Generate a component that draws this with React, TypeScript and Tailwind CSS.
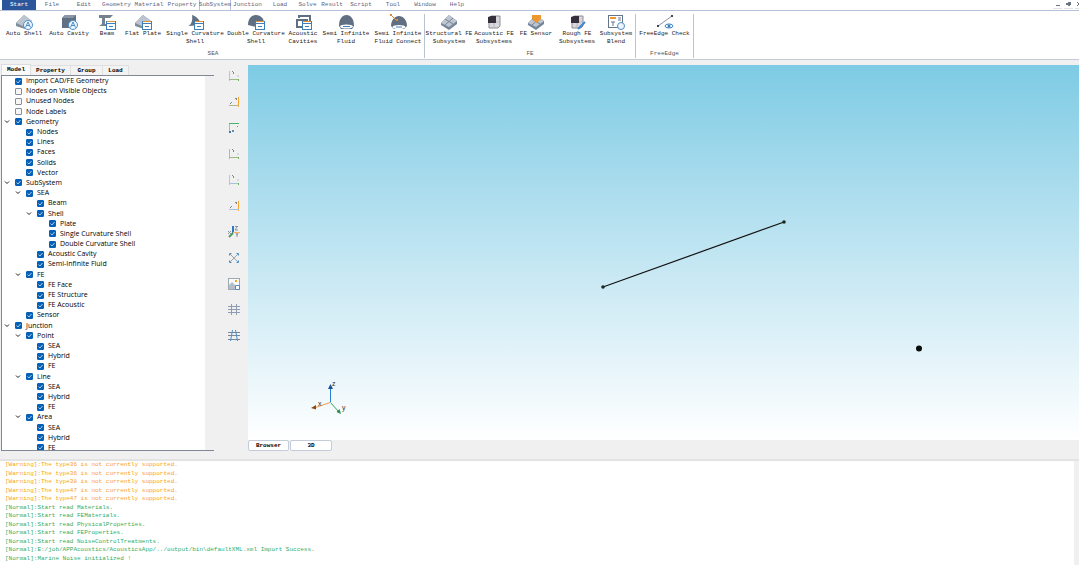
import React from 'react';

interface RibbonItem {
  label: string;
  width: string;
  icon: React.ReactNode;
}

interface TreeItem {
  label: string;
  level: number;
  open?: boolean;
  unchecked?: boolean;
}

const MENU = [
  { label: 'File', width: 'w-8' },
  { label: 'Edit', width: 'w-8' },
  { label: 'Geometry', width: 'w-[33px]' },
  { label: 'Material', width: 'w-8' },
  { label: 'Property', width: 'w-[34px]' },
  { label: 'SubSystem', width: 'w-8', active: true },
  { label: 'Junction', width: 'w-[33px]' },
  { label: 'Load', width: 'w-8' },
  { label: 'Solve', width: 'w-[23px]' },
  { label: 'Result', width: 'w-[26px]' },
  { label: 'Script', width: 'w-8' },
  { label: 'Tool', width: 'w-8' },
  { label: 'Window', width: 'w-8' },
  { label: 'Help', width: 'w-8' },
];

// ribbon icons share one 20x16 grid
function Glyph({ children }: { children: React.ReactNode }) {
  return (
    <svg viewBox="0 0 20 16" className="h-4 w-5" fill="none" aria-hidden="true">
      {children}
    </svg>
  );
}

const AutoBadge = () => (
  <g>
    <circle cx="14" cy="11" r="4.5" fill="#eef5fb" stroke="#4b8ec8" />
    <path d="M11.5 13.5l2.500-5.500 2.500 5.500M12.500 11.500h3" stroke="#4b8ec8" />
  </g>
);

const FormBadge = () => (
  <g>
    <rect x="9.5" y="7.5" width="9" height="8" fill="#fff" stroke="#3c7fbd" />
    <path d="M10 7.5h8" stroke="#e0923c" />
    <path d="M9 9.5h10M12 12.5h4" stroke="#3c7fbd" />
  </g>
);

const Slab = () => (
  <g>
    <path d="M2 9l8-8 8 6-7 8-9-3z" fill="#7d8b9b" />
    <path d="M2 9l8-8 8 6-7 6z" fill="#bcc5cf" />
  </g>
);

const Block = () => (
  <g>
    <path d="M2 9l8-8 8 6v3l-8 6-8-5z" fill="#76869a" />
    <path d="M2 9l8-8 8 6-8 6z" fill="#bcc5d0" />
    <path d="M6 5l8 5M6 11l8-7" stroke="#78879a" />
  </g>
);

const Cube = () => (
  <g>
    <path d="M5 4l2-2h9v10l-2 2H5z" fill="#d8d8dc" stroke="#8d8d94" />
    <path d="M9 8h7M10 8v6" stroke="#b6b6bb" />
    <path d="M4 3l3-1h5v7H4z" fill="#35303c" />
  </g>
);

const SEA_ITEMS: RibbonItem[] = [
  { label: 'Auto Shell', width: 'w-11', icon: <Glyph><Slab /><AutoBadge /></Glyph> },
  { label: 'Auto Cavity', width: 'w-[46px]', icon: <Glyph><path d="M3 4l3-3h11v9l-3 4H3z" fill="#607082" /><path d="M3 4l3-3h11l-3 3z" fill="#8896a6" /><AutoBadge /></Glyph> },
  { label: 'Beam', width: 'w-[30px]', icon: <Glyph><path d="M2 1h14l-3 3H8v6h3v2H2l3-2V4H2z" fill="#75818f" /><FormBadge /></Glyph> },
  { label: 'Flat Plate', width: 'w-[42px]', icon: <Glyph><Slab /><FormBadge /></Glyph> },
  { label: 'Single Curvature\nShell', width: 'w-[62px]', icon: <Glyph><path d="M7 1c4 1 8 5 10 10l-14 1c3-1 5-5 4-11z" fill="#607082" /><FormBadge /></Glyph> },
  { label: 'Double Curvature\nShell', width: 'w-[60px]', icon: <Glyph><path d="M2 11C2 4 6 1 10 1s8 3 8 8l-8 4z" fill="#607082" /><FormBadge /></Glyph> },
  { label: 'Acoustic\nCavities', width: 'w-[34px]', icon: <Glyph><path d="M6 4V2h11v6M4 14V6h10v3M3 13h6" stroke="#607082" strokeWidth="2" /><FormBadge /></Glyph> },
  { label: 'Semi Infinite\nFluid', width: 'w-[52px]', icon: <Glyph><path d="M3 12c0-7 3-11 7.500-11S18 5 18 12l-2 3H5z" fill="#607082" /><ellipse cx="10.500" cy="12.500" rx="6.500" ry="2" fill="#fff" /><path d="M7 12.500h7" stroke="#3c7fbd" /></Glyph> },
  { label: 'Semi Infinite\nFluid Connect', width: 'w-[52px]', icon: <Glyph><path d="M3 12c0-6 4-10 8-10s8 4 8 10l-3 3H6z" fill="#607082" /><ellipse cx="11" cy="13" rx="6.500" ry="2" fill="#fff" /><path d="M8 13h6" stroke="#3c7fbd" /><path d="M3 1l6 6" stroke="#d98a3a" /><path d="M2 0h2v2H2zM8 5h2v2H8z" fill="#d98a3a" /></Glyph> },
];

const FE_ITEMS: RibbonItem[] = [
  { label: 'Structural FE\nSubsystem', width: 'w-12', icon: <Glyph><Block /></Glyph> },
  { label: 'Acoustic FE\nSubsystems', width: 'w-[42px]', icon: <Glyph><Cube /></Glyph> },
  { label: 'FE Sensor', width: 'w-[42px]', icon: <Glyph><Block /><path d="M6 1h9v4l-4.500 4L6 5z" fill="#ee962f" /></Glyph> },
  { label: 'Rough FE\nSubsystems', width: 'w-10', icon: <Glyph><Cube /><path d="M11 15l7-7" stroke="#3c87cd" strokeWidth="2" /></Glyph> },
  { label: 'Subsystem\nBlend', width: 'w-[38px]', icon: <Glyph><rect x="2.500" y="1.500" width="14" height="12" fill="#fff" stroke="#64758a" /><path d="M4 3h6v2H4z" fill="#ee962f" /><path d="M12 4h3M12 6h3M5 8h4M7 8v4" stroke="#64758a" /><circle cx="15" cy="12" r="3.500" fill="#edf4fb" stroke="#4b8ec8" /></Glyph> },
];

const EDGE_ITEMS: RibbonItem[] = [
  { label: 'FreeEdge Check', width: 'w-[57px]', icon: <Glyph><path d="M3 12L17 2" stroke="#8b95a1" /><path d="M2 11h2v2H2zM16 1h2v2h-2z" fill="#3a4656" /><ellipse cx="14" cy="12" rx="4" ry="2" fill="#fff" stroke="#3c7fbd" /><circle cx="14" cy="12" r="1.500" fill="#3c7fbd" /></Glyph> },
];

const TREE: TreeItem[] = [
  { label: 'Import CAD/FE Geometry', level: 0 },
  { label: 'Nodes on Visible Objects', level: 0, unchecked: true },
  { label: 'Unused Nodes', level: 0, unchecked: true },
  { label: 'Node Labels', level: 0, unchecked: true },
  { label: 'Geometry', level: 0, open: true },
  { label: 'Nodes', level: 1 },
  { label: 'Lines', level: 1 },
  { label: 'Faces', level: 1 },
  { label: 'Solids', level: 1 },
  { label: 'Vector', level: 1 },
  { label: 'SubSystem', level: 0, open: true },
  { label: 'SEA', level: 1, open: true },
  { label: 'Beam', level: 2 },
  { label: 'Shell', level: 2, open: true },
  { label: 'Plate', level: 3 },
  { label: 'Single Curvature Shell', level: 3 },
  { label: 'Double Curvature Shell', level: 3 },
  { label: 'Acoustic Cavity', level: 2 },
  { label: 'Semi-Infinite Fluid', level: 2 },
  { label: 'FE', level: 1, open: true },
  { label: 'FE Face', level: 2 },
  { label: 'FE Structure', level: 2 },
  { label: 'FE Acoustic', level: 2 },
  { label: 'Sensor', level: 1 },
  { label: 'Junction', level: 0, open: true },
  { label: 'Point', level: 1, open: true },
  { label: 'SEA', level: 2 },
  { label: 'Hybrid', level: 2 },
  { label: 'FE', level: 2 },
  { label: 'Line', level: 1, open: true },
  { label: 'SEA', level: 2 },
  { label: 'Hybrid', level: 2 },
  { label: 'FE', level: 2 },
  { label: 'Area', level: 1, open: true },
  { label: 'SEA', level: 2 },
  { label: 'Hybrid', level: 2 },
  { label: 'FE', level: 2 },
];

const INDENT = ['pl-[2px]', 'pl-[13px]', 'pl-[24px]', 'pl-[36px]'];

const LOG = [
  '[Warning]:The type36 is not currently supported.',
  '[Warning]:The type36 is not currently supported.',
  '[Warning]:The type38 is not currently supported.',
  '[Warning]:The type47 is not currently supported.',
  '[Warning]:The type47 is not currently supported.',
  '[Normal]:Start read Materials.',
  '[Normal]:Start read FEMaterials.',
  '[Normal]:Start read PhysicalProperties.',
  '[Normal]:Start read FEProperties.',
  '[Normal]:Start read NoiseControlTreatments.',
  '[Normal]:E:/job/APPAcoustics/AcousticsApp/../output/bin\\defaultXML.xml Import Success.',
  '[Normal]:Marine Noise initialized !',
];

// an L-shaped pair of axes; corner is the side on which the vertical one stands
function AxisIcon({ v, h, corner, top }: { v: string; h: string; corner: 'left' | 'right'; top?: boolean }) {
  const x = corner === 'left' ? 1.5 : 10.5;
  const y = top ? 1.5 : 9.5;
  return (
    <g>
      <path d={`M${x} 1v10`} stroke={v} />
      <path d={`M1 ${y}h10`} stroke={h} />
      {corner === 'left' ? (
        <path d={top ? 'M4 8h2v2H4zM9 4h1v1H9z' : 'M4 1h1v1H4zM5 2h1v2H5z'} fill="#7c8694" />
      ) : (
        <path d="M7 2h2v1H7zM8 3h1v1H8zM3 6h1v1H3zM2 7h1v1H2z" fill="#7c8694" />
      )}
      {corner === 'left' && !top && <path d="M9 5h2v2H9z" fill="#d5d8dc" />}
      {corner === 'left' && <path d={top ? 'M1 9h2v2H1z' : 'M10 9h1v2h-1z'} fill={top ? '#3d79a8' : '#6cb35c'} />}
    </g>
  );
}

const VIEW_TOOLS: { name: string; icon: React.ReactNode }[] = [
  { name: 'Front view', icon: <AxisIcon v="#fbb870" h="#a3b884" corner="left" /> },
  { name: 'Back view', icon: <AxisIcon v="#fba52c" h="#b5b58c" corner="right" /> },
  { name: 'Top view', icon: <AxisIcon v="#a9b9d2" h="#49b56e" corner="left" top /> },
  { name: 'Left view', icon: <AxisIcon v="#a9b9d2" h="#a3b884" corner="left" /> },
  { name: 'Bottom view', icon: <AxisIcon v="#fbb870" h="#a9c1dc" corner="left" /> },
  { name: 'Right view', icon: <AxisIcon v="#fba52c" h="#a9c1dc" corner="right" /> },
  { name: 'Isometric view', icon: <g><path d="M5 7V0" stroke="#2f79bf" strokeWidth="2" /><path d="M5 6.500h7" stroke="#fbb25a" /><path d="M5 7l-4 4" stroke="#4d9a67" strokeWidth="2" /><path d="M7 0.500h3M9 1L7 4h3M0 5l3 3M3 5L0 8M8 7l1 2 1-2M9 9v2" stroke="#8a93a0" /></g> },
  { name: 'Fit to window', icon: <g><path d="M2 2l8 8M10 2l-8 8" stroke="#98a3af" /><path d="M1.500 3.500v-2h2M8.500 1.500h2v2M10.500 8.500v2h-2M3.500 10.500h-2v-2" stroke="#4b8ec8" /></g> },
  { name: 'Save picture', icon: <g><rect x="0.500" y="0.500" width="11" height="11" fill="#fafafa" stroke="#a1a7ae" /><path d="M1 11V7l3-3 3 3v4z" fill="#b3bfcc" /><path d="M7 2h2v2H7z" fill="#f5a52f" /><path d="M7.500 7.500h4v4h-4z" fill="#fff" stroke="#4b8ec8" /></g> },
  { name: 'Grid', icon: <path d="M0 2.500h12M0 5.500h12M0 8.500h12M3.500 0v11M8.500 0v11" stroke="#8f9cb2" /> },
  { name: 'Perspective grid', icon: <g><path d="M0 2.500h12M0 5.500h12M0 9.500h12" stroke="#7c8794" /><path d="M4.500 0L2.500 11M7.500 0l2 11" stroke="#4b8ec8" /></g> },
];

function RibbonGroup({ title, items }: { title: string; items: RibbonItem[] }) {
  return (
    <section className="flex flex-col justify-between border-r border-[#b9c3d2]">
      <div className="flex">
        {items.map(item => (
          <button key={item.label} className={`flex shrink-0 flex-col items-center ${item.width}`}>
            {item.icon}
            <span className="whitespace-pre text-center leading-2 text-[#222]">{item.label}</span>
          </button>
        ))}
      </div>
      <h2 className="text-center leading-2 text-[#555]">{title}</h2>
    </section>
  );
}

function TreeRow({ item }: { item: TreeItem }) {
  return (
    <li className={`flex items-center ${INDENT[item.level]}`}>
      {item.open ? (
        <button aria-label="Collapse" className="flex h-2 w-[11px] shrink-0 items-center">
          <svg viewBox="0 0 6 4" className="h-1 w-1.5" fill="none">
            <path d="M1 0.500l2 2 2-2" stroke="#222" />
          </svg>
        </button>
      ) : (
        <span className="w-[11px] shrink-0" />
      )}
      <label className="flex items-center gap-1 whitespace-nowrap">
        <span className="grid h-[7px] w-[7px] shrink-0">
          <input
            type="checkbox"
            defaultChecked={!item.unchecked}
            className="peer col-start-1 row-start-1 h-[7px] w-[7px] appearance-none rounded-[1px] border border-[#858f9c] bg-[#f6f6f6] checked:border-[#0560b6] checked:bg-[#0560b6]"
          />
          <svg viewBox="0 0 7 7" className="pointer-events-none invisible col-start-1 row-start-1 h-[7px] w-[7px] peer-checked:visible" fill="none">
            <path d="M1.500 3.500l1.500 1.500 2.500-3" stroke="#a9cbe8" />
          </svg>
        </span>
        {item.label}
      </label>
    </li>
  );
}

function ModelPanel() {
  return (
    <aside className="flex w-[214px] shrink-0 flex-col pl-px">
      <div role="tablist" className="flex h-[11px] shrink-0 font-bold">
        <button role="tab" aria-selected="true" className="w-[30px] border-x border-t border-[#ddd] bg-[#fafafa]">Model</button>
        <button role="tab" className="mt-px w-10 border-t border-r border-[#e0e0e0] bg-[#f3f3f3]">Property</button>
        <button role="tab" className="mt-px w-8 border-t border-r border-[#e0e0e0] bg-[#f3f3f3]">Group</button>
        <button role="tab" className="mt-px w-[26px] border-t border-r border-[#e0e0e0] bg-[#f3f3f3]">Load</button>
      </div>
      <div className="flex min-h-0 flex-1 overflow-hidden border-y border-l border-[#7f8894] bg-white">
        <ul className="grid h-[377px] flex-1 auto-rows-fr font-['Open_Sans','Noto_Sans',sans-serif] text-[7px] leading-2 text-black">
          {TREE.map((item, index) => (
            <TreeRow key={index} item={item} />
          ))}
        </ul>
        <div className="w-[9px] bg-[#f0f0f0]" />
      </div>
    </aside>
  );
}

function Viewport() {
  return (
    <main className="flex min-w-0 flex-1 flex-col pt-px">
      <div className="min-h-0 flex-1 bg-linear-to-b from-[#7dcbe4] to-white">
        <svg viewBox="0 0 831 375" className="h-full w-full" fill="none">
          <path d="M355 222L536 157" stroke="#111" strokeWidth="1.200" />
          <circle cx="355" cy="222" r="1.800" fill="#1c2a20" />
          <circle cx="536" cy="157" r="1.800" fill="#1c2a20" />
          <circle cx="671" cy="283.500" r="3" fill="#0b0b0b" />
          <path d="M82.500 337V322" stroke="#2b7fd0" />
          <path d="M80 324l2.500-5 2.500 5z" fill="#17509c" />
          <path d="M82 337.500L66 343" stroke="#f39a45" />
          <path d="M68 340l-5 3 5 1.500z" fill="#8c4a1c" />
          <path d="M82.500 337.500l8 9" stroke="#3fa565" />
          <path d="M91.500 344l1.500 5-4.500-2z" fill="#2a8a50" />
          <g fill="#333" fontSize="7" fontFamily="Liberation Sans, sans-serif">
            <text x="84" y="321">z</text>
            <text x="70" y="341">x</text>
            <text x="94" y="345">y</text>
          </g>
        </svg>
      </div>
      <div role="tablist" className="flex h-[11px] shrink-0 gap-px font-bold">
        <button role="tab" className="w-[41px] rounded-[2px] border border-[#c3ccd8] bg-white">Browser</button>
        <button role="tab" aria-selected="true" className="w-[42px] rounded-[2px] border border-[#c3ccd8] bg-white">3D</button>
      </div>
    </main>
  );
}

export default function App() {
  return (
    <div className="flex h-screen flex-col overflow-hidden bg-[#f0f0f0] font-['Liberation_Mono',monospace] text-[6px] leading-2 text-black">
      <header className="shrink-0 bg-white">
        <nav className="flex h-[11px] border-b border-[#b4c0dc] pl-0.5 text-[#5b6784]">
          <button className="w-[34px] bg-[#2b579a] text-white">Start</button>
          {MENU.map(item => (
            <button
              key={item.label}
              className={`flex shrink-0 justify-center pt-px ${item.width} ${item.active ? 'border-x border-[#b4c0dc]' : ''}`}
            >
              {item.label}
            </button>
          ))}
          <div className="ml-auto flex w-[26px] shrink-0 gap-0.5 overflow-hidden text-[#6c7484]">
            <button aria-label="Minimize" className="h-[9px] w-[9px] shrink-0 border-b border-[#e2e2e2]">
              <svg viewBox="0 0 9 8" className="h-2 w-[9px]"><path d="M3 5h4v1H3z" fill="currentColor" /></svg>
            </button>
            <button aria-label="Restore" className="h-[9px] w-[9px] shrink-0 border-b border-[#e2e2e2]">
              <svg viewBox="0 0 9 8" className="h-2 w-[9px]"><path d="M4 2h3v3H6v1H4V5H2V3h2z" fill="currentColor" /></svg>
            </button>
            <button aria-label="Close" className="h-[9px] w-[9px] shrink-0 border-b border-[#e2e2e2]">
              <svg viewBox="0 0 9 8" className="h-2 w-[9px]" fill="none"><path d="M2 2l4 4M6 2L2 6" stroke="currentColor" /></svg>
            </button>
          </div>
        </nav>
        <div className="flex h-[49px] border-b border-[#c3cbd8] pt-[3px] pb-px pl-0.5">
          <RibbonGroup title="SEA" items={SEA_ITEMS} />
          <RibbonGroup title="FE" items={FE_ITEMS} />
          <RibbonGroup title="FreeEdge" items={EDGE_ITEMS} />
        </div>
      </header>

      <div className="flex min-h-0 flex-1 pt-1">
        <ModelPanel />
        <div className="flex w-[34px] shrink-0 flex-col items-center gap-3.5 pt-[6px] pl-1.5">
          {VIEW_TOOLS.map(tool => (
            <button key={tool.name} aria-label={tool.name} className="h-3 w-3 shrink-0">
              <svg viewBox="0 0 12 12" className="h-3 w-3" fill="none">{tool.icon}</svg>
            </button>
          ))}
        </div>
        <Viewport />
      </div>

      <footer className="mt-2 flex h-[106px] shrink-0 border-t-2 border-[#e3e3e3] bg-white pl-[5px]">
        <ol className="grid h-[102px] flex-1 auto-rows-fr">
          {LOG.map((line, index) => (
            <li key={index} className={line.startsWith('[Warning]') ? 'text-[#f9a11b]' : 'text-[#2fae66]'}>
              {line}
            </li>
          ))}
        </ol>
        <div className="w-[5px] bg-[#f0f0f0]" />
      </footer>
    </div>
  );
}
